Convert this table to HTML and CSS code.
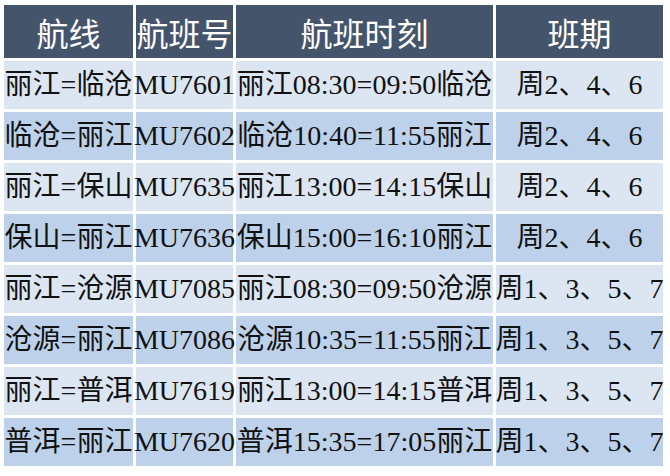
FILE: index.html
```html
<!DOCTYPE html>
<html>
<head>
<meta charset="utf-8">
<title>航班</title>
<link rel="stylesheet" href="styles.css">
</head>
<body>
<div class="grid">
  <div class="cell head">航线</div>
  <div class="cell head">航班号</div>
  <div class="cell head">航班时刻</div>
  <div class="cell head">班期</div>

  <div class="cell light">丽江=临沧</div>
  <div class="cell light">MU7601</div>
  <div class="cell light">丽江08:30=09:50临沧</div>
  <div class="cell light">周2、4、6</div>

  <div class="cell dark">临沧=丽江</div>
  <div class="cell dark">MU7602</div>
  <div class="cell dark">临沧10:40=11:55丽江</div>
  <div class="cell dark">周2、4、6</div>

  <div class="cell light">丽江=保山</div>
  <div class="cell light">MU7635</div>
  <div class="cell light">丽江13:00=14:15保山</div>
  <div class="cell light">周2、4、6</div>

  <div class="cell dark">保山=丽江</div>
  <div class="cell dark">MU7636</div>
  <div class="cell dark">保山15:00=16:10丽江</div>
  <div class="cell dark">周2、4、6</div>

  <div class="cell light">丽江=沧源</div>
  <div class="cell light">MU7085</div>
  <div class="cell light">丽江08:30=09:50沧源</div>
  <div class="cell light">周1、3、5、7</div>

  <div class="cell dark">沧源=丽江</div>
  <div class="cell dark">MU7086</div>
  <div class="cell dark">沧源10:35=11:55丽江</div>
  <div class="cell dark">周1、3、5、7</div>

  <div class="cell light">丽江=普洱</div>
  <div class="cell light">MU7619</div>
  <div class="cell light">丽江13:00=14:15普洱</div>
  <div class="cell light">周1、3、5、7</div>

  <div class="cell dark">普洱=丽江</div>
  <div class="cell dark">MU7620</div>
  <div class="cell dark">普洱15:35=17:05丽江</div>
  <div class="cell dark">周1、3、5、7</div>
</div>
</body>
</html>
```

FILE: styles.css
```css
html, body {
  margin: 0;
  padding: 0;
  background: #ffffff;
}

body {
  padding: 5px 0 0 4px;
}

.grid {
  display: grid;
  grid-template-columns: 129px 97px 257px 167px;
  grid-template-rows: 53px repeat(8, 48px);
  column-gap: 3px;
  row-gap: 3px;
}

.cell {
  display: flex;
  align-items: center;
  justify-content: center;
  white-space: nowrap;
  line-height: 1;
  font-family: "Liberation Serif", "Times New Roman", "DejaVu Serif", "Noto Sans CJK SC", serif;
  font-size: 28px;
  font-weight: 400;
  color: #111111;
}

.head {
  background: #44546a;
  color: #ffffff;
  font-family: "Noto Sans CJK SC", sans-serif;
  font-size: 32px;
}

.light {
  background: #dce6f2;
}

.dark {
  background: #bdd2ea;
}
```
